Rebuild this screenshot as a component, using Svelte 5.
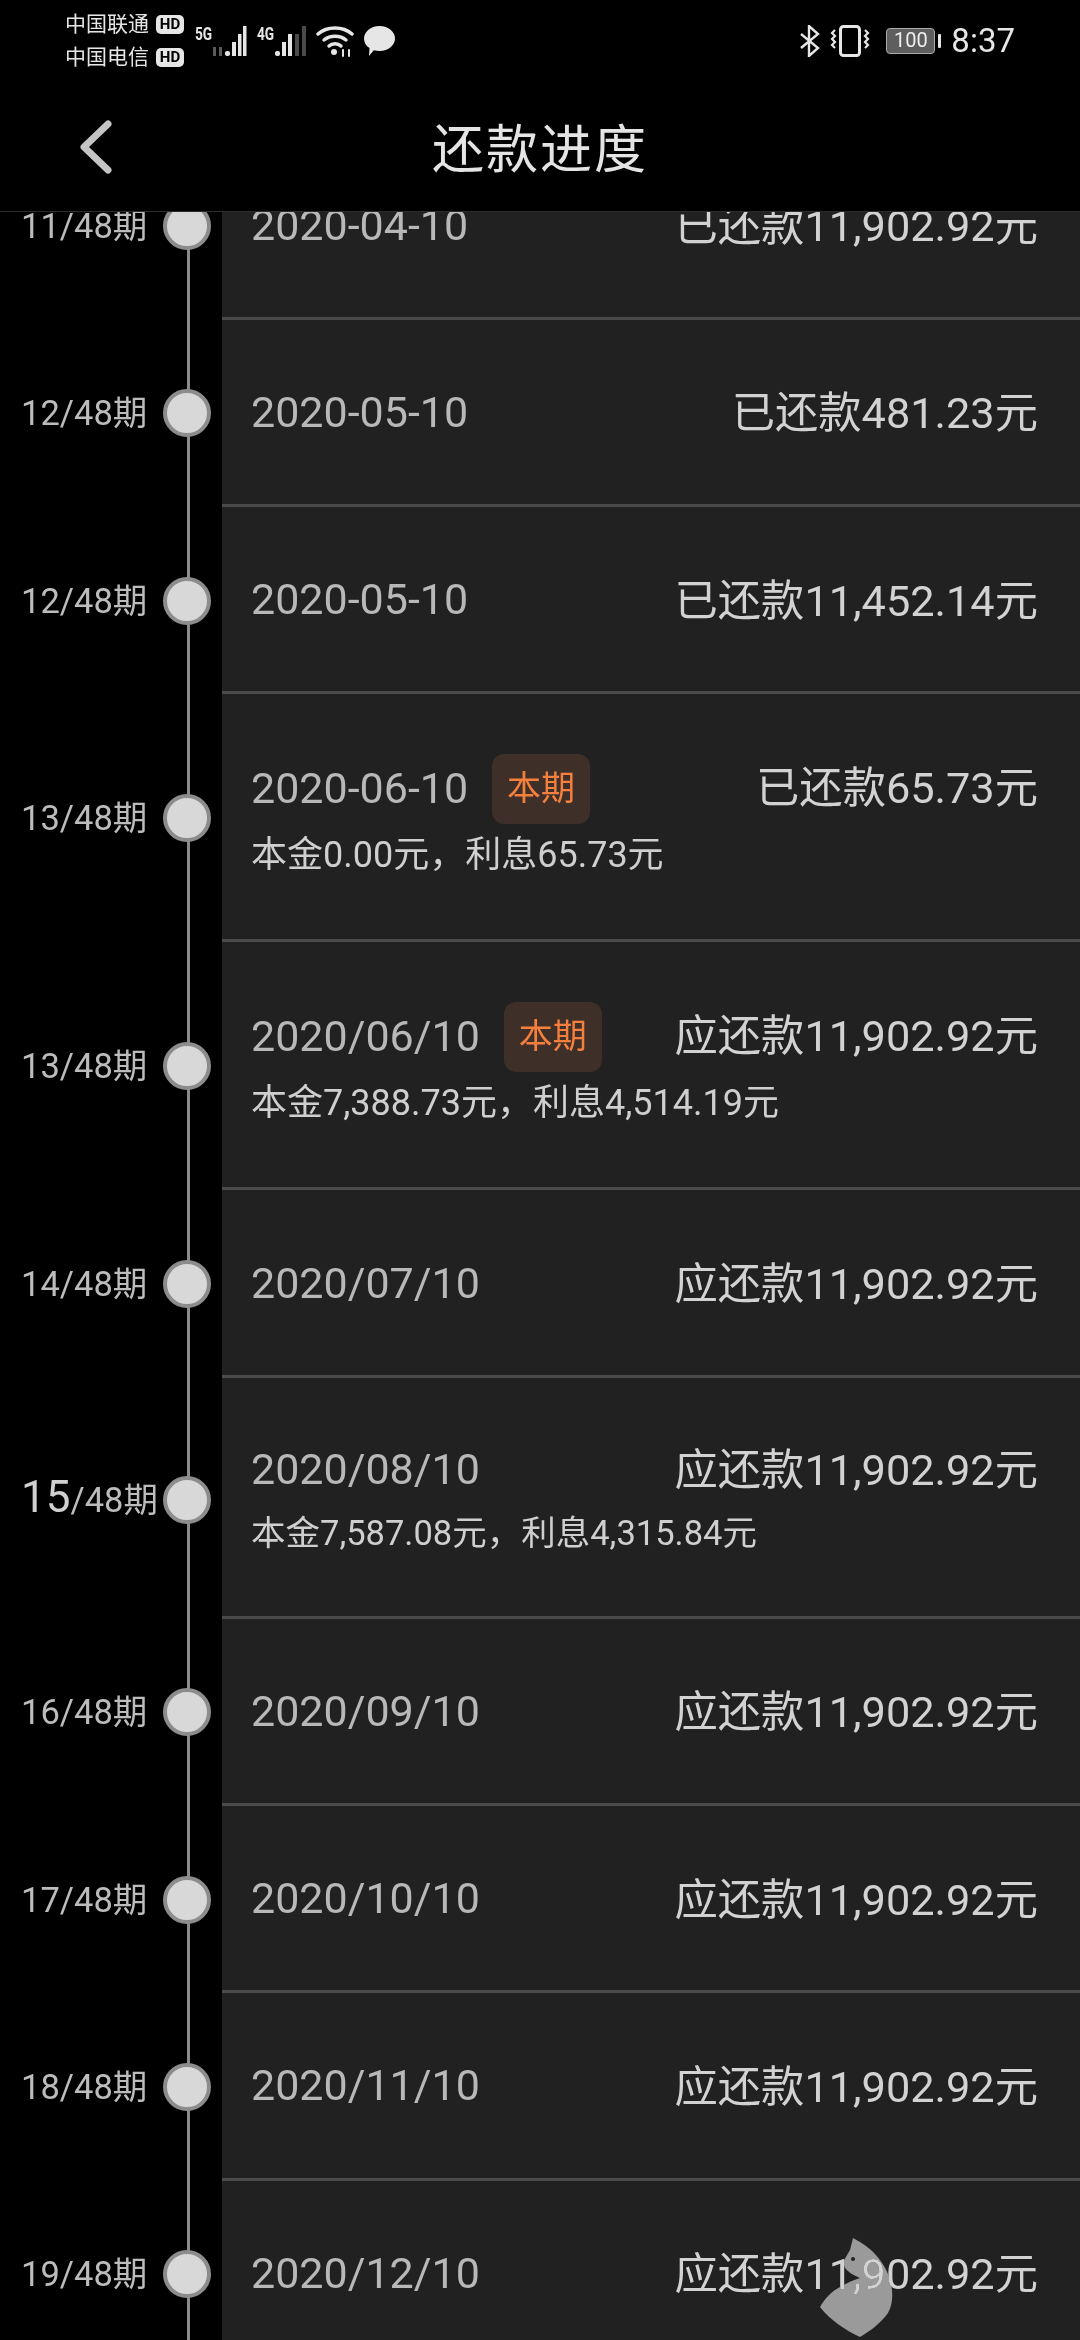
<script lang="ts">
  // Repayment progress timeline: status bar, nav bar and the instalment list.
  type Row = {
    big: string;
    label: string;
    date: string;
    amount: string;
    current?: boolean;
    sub?: string;
    size?: string;
  };

  const rows: Row[] = [
    { big: '', label: '11/48期', date: '2020-04-10', amount: '已还款11,902.92元' },
    { big: '', label: '12/48期', date: '2020-05-10', amount: '已还款481.23元' },
    { big: '', label: '12/48期', date: '2020-05-10', amount: '已还款11,452.14元' },
    { big: '', label: '13/48期', date: '2020-06-10', amount: '已还款65.73元', current: true, sub: '本金0.00元，利息65.73元', size: 'tall' },
    { big: '', label: '13/48期', date: '2020/06/10', amount: '应还款11,902.92元', current: true, sub: '本金7,388.73元，利息4,514.19元', size: 'tall' },
    { big: '', label: '14/48期', date: '2020/07/10', amount: '应还款11,902.92元' },
    { big: '15', label: '/48期', date: '2020/08/10', amount: '应还款11,902.92元', sub: '本金7,587.08元，利息4,315.84元', size: 'mid' },
    { big: '', label: '16/48期', date: '2020/09/10', amount: '应还款11,902.92元' },
    { big: '', label: '17/48期', date: '2020/10/10', amount: '应还款11,902.92元' },
    { big: '', label: '18/48期', date: '2020/11/10', amount: '应还款11,902.92元' },
    { big: '', label: '19/48期', date: '2020/12/10', amount: '应还款11,902.92元' },
  ];
</script>

<div class="page">
  <header class="top">
    <div class="status">
      <div class="carriers">
        <div class="carrier">中国联通<span class="hd">HD</span></div>
        <div class="carrier">中国电信<span class="hd">HD</span></div>
      </div>
      <div class="signal">
        <span class="net">5G</span>
        <svg width="34" height="32" viewBox="0 0 34 32">
          <g fill="#5a5a5a"><rect x="0" y="22" width="3" height="9" /><rect x="6" y="22" width="3" height="9" /></g>
          <g fill="#e6e6e6">
            <rect x="12" y="26" width="5" height="5" rx="2" /><rect x="19" y="17" width="4" height="14" />
            <rect x="25" y="9" width="3.5" height="22" /><rect x="30" y="1" width="3.5" height="30" />
          </g>
        </svg>
      </div>
      <div class="signal second">
        <span class="net">4G</span>
        <svg width="32" height="32" viewBox="0 0 32 32">
          <g fill="#e6e6e6"><rect x="0" y="26" width="5" height="5" rx="2" /><rect x="7" y="17" width="4" height="14" /><rect x="13" y="9" width="4" height="22" /></g>
          <g fill="#4a4a4a"><rect x="20" y="9" width="4" height="22" /><rect x="27" y="1" width="4" height="30" /></g>
        </svg>
      </div>
      <svg class="wifi" width="38" height="32" viewBox="0 0 38 32" fill="none" stroke="#e6e6e6" stroke-width="3.4" stroke-linecap="round">
        <path d="M2 9 C11 1 27 1 36 9" /><path d="M8 15 C14 10 24 10 30 15" /><path d="M13 21 C16 18 22 18 25 21" />
        <circle cx="18" cy="27" r="3" fill="#e6e6e6" stroke="none" />
        <path d="M27 31v-6M33 25v6" stroke-width="2" />
      </svg>
      <svg class="bubble" width="33" height="32" viewBox="0 0 33 32">
        <path fill="#e6e6e6" d="M16.5 1C25.5 1 32 7 32 13.5S25.500 26 16.500 26C14.500 26 12.500 25.700 10.800 25.200L6 31L6.500 23C3 20.800 1 17.500 1 13.500C1 7 7.500 1 16.500 1Z" />
      </svg>
      <div class="spacer"></div>
      <svg width="20" height="32" viewBox="0 0 20 32" fill="none" stroke="#e6e6e6" stroke-width="2.4">
        <path d="M1 9L18 23L9 31V1L18 9L1 23" />
      </svg>
      <svg class="vibrate" width="40" height="32" viewBox="0 0 40 32" fill="none" stroke="#e6e6e6">
        <rect x="10.500" y="1.500" width="19" height="29" rx="3" stroke-width="3" />
        <path d="M5 5l-3 3 3 3-3 3 3 3-3 3 3 3M35 5l3 3-3 3 3 3-3 3 3 3-3 3" stroke-width="2.200" />
      </svg>
      <div class="battery">
        <div class="cell">100</div>
        <div class="nub"></div>
      </div>
      <span class="time">8:37</span>
    </div>
    <nav class="nav">
      <svg class="back" width="36" height="56" viewBox="0 0 36 56" fill="none" stroke="#c4c4c4" stroke-width="7" stroke-linecap="round" stroke-linejoin="round">
        <path d="M30 5L6 28L30 51" />
      </svg>
      <h1>还款进度</h1>
    </nav>
  </header>

  <div class="scroller">
    <div class="list">
      {#each rows as row}
        <div class="row {row.size ?? ''}">
          <div class="side">
            <span class="period">{#if row.big}<span class="big">{row.big}</span>{/if}{row.label}</span>
            <span class="dot"></span>
          </div>
          <div class="card">
            <div class="line">
              <span class="date">{row.date}</span>
              {#if row.current}<span class="badge">本期</span>{/if}
              <span class="amount">{row.amount}</span>
            </div>
            {#if row.sub}<div class="sub">{row.sub}</div>{/if}
          </div>
        </div>
      {/each}
    </div>
    <svg class="cat" width="85" height="110" viewBox="0 0 85 110">
      <path fill="#9a9a9a" d="M38 8L45 12C62 22 75 40 77 60C78 70 76 78 73 83C65 94 55 101 45 107C30 100 15 90 5 77C10 68 17 61 25 57C32 53 38 50 45 48C38 45 33 42 30 38L28 32L35 20Z" />
      <circle cx="38" cy="29" r="2" fill="#222" />
    </svg>
  </div>
</div>

<style>
  :global(body) {
    margin: 0;
    background: #000;
  }

  .page {
    position: relative;
    width: 1080px;
    height: 2340px;
    display: flex;
    flex-direction: column;
    overflow: hidden;
    background: #000;
    font-family: Roboto, "Noto Sans CJK SC", sans-serif;
  }

  .top {
    height: 212px;
    flex-shrink: 0;
    box-sizing: border-box;
    border-bottom: 1px solid #2c2c2c;
  }

  .status {
    height: 80px;
    display: flex;
    align-items: center;
    padding: 2px 65px 0 65px;
    box-sizing: border-box;
    color: #e6e6e6;
  }

  .carriers {
    display: flex;
    flex-direction: column;
    gap: 8px;
  }

  .carrier {
    display: flex;
    align-items: center;
    font-size: 21px;
    line-height: 25px;
    letter-spacing: 0;
  }

  .hd {
    margin-left: 7px;
    width: 28px;
    height: 19px;
    border-radius: 5px;
    background: #e6e6e6;
    color: #000;
    font-size: 15px;
    line-height: 19px;
    font-weight: 700;
    text-align: center;
  }

  .signal {
    position: relative;
    display: flex;
    align-items: flex-end;
    margin-left: 11px;
    height: 32px;
  }

  .signal.second {
    margin-left: 10px;
  }

  .net {
    width: 18px;
    align-self: flex-start;
    font-size: 19px;
    line-height: 17px;
    font-weight: 700;
    transform: scaleX(0.72);
    transform-origin: left;
  }

  .wifi {
    margin-left: 9px;
  }

  .bubble {
    margin-left: 9px;
  }

  .spacer {
    flex: 1;
  }

  .vibrate {
    margin-left: 10px;
  }

  .battery {
    display: flex;
    align-items: center;
    margin-left: 16px;
    gap: 3px;
  }

  .cell {
    width: 49px;
    height: 26px;
    box-sizing: border-box;
    border: 1.5px solid #aaa;
    border-radius: 4px;
    background: #5e5e5e;
    color: #eee;
    font-size: 20px;
    line-height: 23px;
    text-align: center;
  }

  .nub {
    width: 3px;
    height: 14px;
    border-radius: 1px;
    background: #e6e6e6;
  }

  .time {
    margin-left: 10px;
    font-size: 33px;
    line-height: 40px;
  }

  .nav {
    position: relative;
    height: 131px;
    display: flex;
    align-items: center;
    justify-content: center;
  }

  .back {
    position: absolute;
    left: 78px;
    top: 39px;
  }

  h1 {
    margin: 10px 0 0 0;
    font-size: 52px;
    line-height: 70px;
    font-weight: 400;
    letter-spacing: 2px;
    color: #e4e4e4;
  }

  .scroller {
    position: relative;
    flex: 1;
    min-height: 0;
    overflow: hidden;
  }

  .list {
    margin-top: -79.500px;
  }

  .row {
    display: flex;
    height: 187.300px;
  }

  .row.tall {
    height: 248px;
  }

  .row.mid {
    height: 241px;
  }

  .side {
    position: relative;
    width: 222px;
    flex-shrink: 0;
    box-sizing: border-box;
    display: flex;
    align-items: center;
    justify-content: space-between;
    padding: 0 11px 0 21px;
  }

  .mid .side {
    padding-top: 3px;
  }

  .side::before {
    content: "";
    position: absolute;
    left: 187px;
    top: 0;
    bottom: 0;
    width: 3px;
    background: #8a8a8a;
  }

  .period {
    margin-bottom: 6px;
    font-size: 34.500px;
    color: #bcbcbc;
    white-space: nowrap;
  }

  .big {
    font-size: 44px;
    color: #d0d0d0;
  }

  .dot {
    position: relative;
    width: 48px;
    height: 48px;
    box-sizing: border-box;
    border: 4px solid #8c8c8c;
    border-radius: 50%;
    background: #d8d8d8;
  }

  .card {
    flex: 1;
    box-sizing: border-box;
    display: flex;
    flex-direction: column;
    justify-content: center;
    padding: 0 42px 0 29px;
    background: #212121;
    border-bottom: 3px solid #4b4b4b;
  }

  .line {
    display: flex;
    align-items: center;
    min-height: 50px;
  }

  .date {
    font-size: 43px;
    color: #b8b8b8;
  }

  .badge {
    margin-left: 24px;
    width: 98px;
    height: 70px;
    border-radius: 12px;
    background: #3e2f28;
    color: #f5803e;
    font-size: 34px;
    line-height: 68px;
    text-align: center;
  }

  .amount {
    margin-left: auto;
    margin-bottom: 5px;
    font-size: 43.300px;
    color: #d2d2d2;
    white-space: nowrap;
  }

  .tall .amount {
    margin-bottom: 10px;
  }

  .tall .date {
    margin-bottom: 2px;
  }

  .sub {
    margin-top: 5px;
    font-size: 36px;
    line-height: 50px;
    color: #cfcfcf;
  }

  .mid .sub {
    font-size: 34.500px;
    margin-top: 6px;
  }

  .cat {
    position: absolute;
    left: 815px;
    top: 2018px;
    mix-blend-mode: lighten;
  }
</style>
